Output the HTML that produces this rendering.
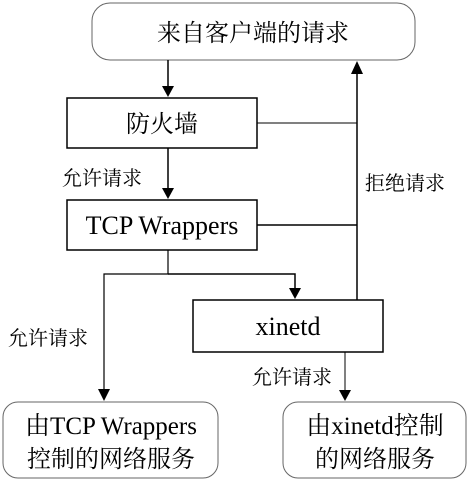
<!DOCTYPE html>
<html><head><meta charset="utf-8"><style>
html,body{margin:0;padding:0;background:#fff;}
svg text{font-family:"Liberation Serif","Noto Serif CJK SC",serif;fill:#000;}
</style></head><body>
<svg width="470" height="483" viewBox="0 0 470 483" xmlns="http://www.w3.org/2000/svg">
<rect x="92" y="3" width="323" height="57" rx="18" fill="#fff" stroke="#666" stroke-width="1"/>
<text x="253" y="41" font-size="24" text-anchor="middle">来自客户端的请求</text>
<g stroke="#000" fill="none">
<rect x="67" y="98" width="190" height="50" stroke-width="1.5"/>
<rect x="67" y="200" width="190" height="50" stroke-width="1.5"/>
<rect x="193" y="300" width="190" height="52" stroke-width="1.5"/>
<line x1="168" y1="60" x2="168" y2="87" stroke-width="1.5"/>
<path d="M162,86 L174,86 L168,97 Z" fill="#000" stroke="none"/>
<line x1="168" y1="148" x2="168" y2="189" stroke-width="1.5"/>
<path d="M162,188 L174,188 L168,199 Z" fill="#000" stroke="none"/>
<line x1="257" y1="123" x2="357" y2="123" stroke-width="1"/>
<line x1="257" y1="225" x2="357" y2="225" stroke-width="1.5"/>
<line x1="357" y1="72" x2="357" y2="300" stroke-width="1.5"/>
<path d="M351,74 L363,74 L357,61 Z" fill="#000" stroke="none"/>
<polyline points="168,250 168,274 104,274 104,390" stroke-width="1.2"/>
<path d="M98,389 L110,389 L104,401 Z" fill="#000" stroke="none"/>
<polyline points="168,274 295,274 295,289" stroke-width="1.5"/>
<path d="M289,288 L301,288 L295,299 Z" fill="#000" stroke="none"/>
<line x1="345" y1="352" x2="345" y2="391" stroke-width="1"/>
<path d="M339,390 L351,390 L345,401 Z" fill="#000" stroke="none"/>
</g>
<text x="162" y="132" font-size="24" text-anchor="middle">防火墙</text>
<text x="162" y="234" font-size="26" text-anchor="middle">TCP Wrappers</text>
<text x="288" y="335" font-size="26" text-anchor="middle">xinetd</text>
<text x="62" y="185" font-size="20">允许请求</text>
<text x="365" y="190" font-size="20">拒绝请求</text>
<text x="8" y="345" font-size="20">允许请求</text>
<text x="252" y="384" font-size="20">允许请求</text>
<rect x="3" y="402" width="215" height="76" rx="15" fill="none" stroke="#666" stroke-width="1"/>
<text x="111" y="434" font-size="25" text-anchor="middle">由TCP Wrappers</text>
<text x="111" y="467" font-size="24" text-anchor="middle">控制的网络服务</text>
<rect x="283" y="402" width="183" height="76" rx="15" fill="none" stroke="#666" stroke-width="1"/>
<text x="375" y="434" font-size="25" text-anchor="middle">由xinetd控制</text>
<text x="375" y="467" font-size="24" text-anchor="middle">的网络服务</text>
</svg>
</body></html>
